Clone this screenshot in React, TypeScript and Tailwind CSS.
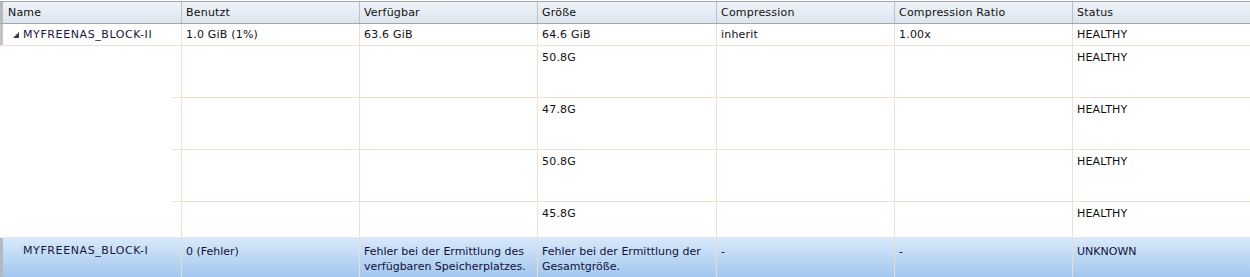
const cols = ["w-[181px]", "w-[178px]", "w-[178px]", "w-[179px]", "w-[178px]", "w-[178px]", "w-[178px]"];

const headers = ["Name", "Benutzt", "Verfügbar", "Größe", "Compression", "Compression Ratio", "Status"];

const disks = [
  { size: "50.8G", h: "h-[52px]" },
  { size: "47.8G", h: "h-[52px]" },
  { size: "50.8G", h: "h-[52px]" },
  { size: "45.8G", h: "h-[35px]" },
];

function Triangle() {
  return (
    <svg width="6" height="6" viewBox="0 0 6 6" className="mr-[4px] shrink-0">
      <path d="M6 0 L6 6 L0 6 Z" fill="#3a3a3a" />
    </svg>
  );
}

export default function App() {
  return (
    <div
      className="w-[1250px] h-[277px] bg-white text-[11px] leading-[14px] text-[#111] overflow-hidden"
      style={{ fontFamily: '"DejaVu Sans", Verdana, sans-serif' }}
    >
      {/* header */}
      <div className="mt-px flex h-[23px] border-y border-[#a3a7ac] bg-gradient-to-b from-[#eef3f8] to-[#dde5ee]">
        {headers.map((h, i) => (
          <div
            key={h}
            className={`${cols[i]} flex items-center pl-[4px] tracking-[0.2px] ${i > 0 ? "border-l border-[#b9c0c8]" : "border-l-[3px] border-[#b7b9bc] pl-[5px]"}`}
          >
            {h}
          </div>
        ))}
      </div>

      {/* pool row */}
      <div className="flex h-[22px] border-b border-[#f0e0d0]">
        <div className={`${cols[0]} flex items-center border-l-[3px] border-[#c3c5c8] pl-[10px] pt-px text-[#1b1440] tracking-[0.6px]`}>
          <Triangle />
          MYFREENAS_BLOCK-II
        </div>
        {["1.0 GiB (1%)", "63.6 GiB", "64.6 GiB", "inherit", "1.00x", "HEALTHY"].map((v, i) => (
          <div key={i} className={`${cols[i + 1]} flex items-center border-l border-[#f0e0d0] pl-[4px] pt-px tracking-[0.2px]`}>
            {v}
          </div>
        ))}
      </div>

      {/* disk rows */}
      {disks.map((d, r) => (
        <div key={r} className={`flex ${d.h}`}>
          <div className={`${cols[0]} flex flex-col justify-end items-end`}>
            {r < disks.length - 1 && <div className="w-[9px] border-b border-[#f0e0d0]" />}
          </div>
          {["", "", d.size, "", "", "HEALTHY"].map((v, i) => (
            <div
              key={i}
              className={`${cols[i + 1]} border-l border-[#f0e0d0] pl-[4px] pt-[5px] tracking-[0.2px] ${r < disks.length - 1 ? "border-b" : ""}`}
            >
              {v}
            </div>
          ))}
        </div>
      ))}

      {/* selected pool row */}
      <div className="flex h-[40px] border-t border-[#dfe8f2] bg-gradient-to-b from-[#d8e9fa] to-[#a2c7ef]">
        <div className={`${cols[0]} border-l-[3px] border-[#b5b8bc] pl-[20px] pt-[6px] text-[#1b1440] tracking-[0.6px]`}>
          MYFREENAS_BLOCK-I
        </div>
        {[
          "0 (Fehler)",
          "Fehler bei der Ermittlung des verfügbaren Speicherplatzes.",
          "Fehler bei der Ermittlung der Gesamtgröße.",
          "-",
          "-",
          "UNKNOWN",
        ].map((v, i) => (
          <div
            key={i}
            className={`${cols[i + 1]} border-l border-[#eadccc] pl-[4px] pt-[6px] leading-[15px] text-[#14103a]`}
          >
            {v}
          </div>
        ))}
      </div>
    </div>
  );
}
